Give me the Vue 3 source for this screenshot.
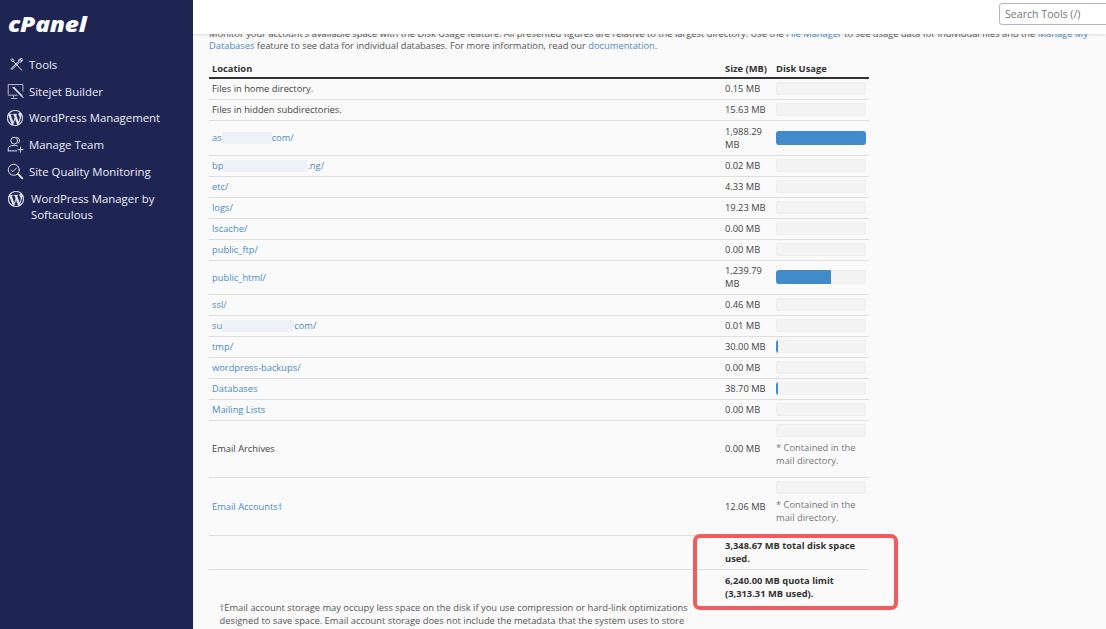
<script setup>
const nav = [
  { label: 'Tools', icon: 'tools' },
  { label: 'Sitejet Builder', icon: 'sitejet' },
  { label: 'WordPress Management', icon: 'wp' },
  { label: 'Manage Team', icon: 'team' },
  { label: 'Site Quality Monitoring', icon: 'quality' },
  { label: 'WordPress Manager by Softaculous', icon: 'wp', wrap: true },
]
const wpPath = 'M21.469 6.825c.84 1.537 1.318 3.3 1.318 5.175 0 3.979-2.156 7.456-5.363 9.325l3.295-9.527c.615-1.54.82-2.771.82-3.864 0-.405-.026-.78-.07-1.11m-7.981.105c.647-.03 1.232-.105 1.232-.105.582-.075.514-.93-.067-.899 0 0-1.755.135-2.88.135-1.064 0-2.85-.15-2.85-.15-.585-.03-.661.855-.075.885 0 0 .54.061 1.125.09l1.68 4.605-2.37 7.08L5.354 6.9c.649-.03 1.234-.1 1.234-.1.585-.075.516-.93-.065-.896 0 0-1.746.138-2.874.138-.2 0-.438-.008-.69-.015C4.911 3.15 8.235 1.215 12 1.215c2.809 0 5.365 1.072 7.286 2.833-.046-.003-.091-.009-.141-.009-1.06 0-1.812.923-1.812 1.914 0 .89.513 1.643 1.06 2.531.411.72.89 1.643.89 2.977 0 .915-.354 1.994-.821 3.479l-1.075 3.585-3.9-11.61.001.014zM12 22.784c-1.059 0-2.081-.153-3.048-.437l3.237-9.406 3.315 9.087c.024.053.05.101.078.149-1.12.393-2.325.609-3.582.609M1.211 12c0-1.564.336-3.05.935-4.39L7.29 21.709C3.694 19.96 1.212 16.271 1.211 12M12 0C5.385 0 0 5.385 0 12s5.385 12 12 12 12-5.385 12-12S18.615 0 12 0'

const rows = [
  { name: 'Files in home directory.', size: '0.15 MB', pct: 0, h: 21 },
  { name: 'Files in hidden subdirectories.', size: '15.63 MB', pct: 0, h: 21 },
  { a: 'as', gap: 50, b: 'com/', link: true, size: '1,988.29 MB', pct: 100, h: 35 },
  { a: 'bp', gap: 84, b: '.ng/', link: true, size: '0.02 MB', pct: 0, h: 21 },
  { name: 'etc/', link: true, size: '4.33 MB', pct: 0, h: 21 },
  { name: 'logs/', link: true, size: '19.23 MB', pct: 0, h: 21 },
  { name: 'lscache/', link: true, size: '0.00 MB', pct: 0, h: 21 },
  { name: 'public_ftp/', link: true, size: '0.00 MB', pct: 0, h: 21 },
  { name: 'public_html/', link: true, size: '1,239.79 MB', pct: 61, h: 34 },
  { name: 'ssl/', link: true, size: '0.46 MB', pct: 0, h: 21 },
  { a: 'su', gap: 72, b: 'com/', link: true, size: '0.01 MB', pct: 0, h: 21 },
  { name: 'tmp/', link: true, size: '30.00 MB', pct: 2, h: 21 },
  { name: 'wordpress-backups/', link: true, size: '0.00 MB', pct: 0, h: 21 },
  { name: 'Databases', link: true, size: '38.70 MB', pct: 2, h: 21 },
  { name: 'Mailing Lists', link: true, size: '0.00 MB', pct: 0, h: 21 },
  { name: 'Email Archives', size: '0.00 MB', pct: 0, h: 57, note: true },
  { name: 'Email Accounts†', link: true, size: '12.06 MB', pct: 0, h: 58, note: true },
]
</script>

<template>
  <div class="page">
    <aside class="sidebar">
      <div class="logo"><span class="logo-text">cPanel</span></div>
      <nav class="nav">
        <a v-for="item in nav" :key="item.label" class="nav-item" :class="{ wrap: item.wrap }">
          <span class="nav-icon">
            <svg v-if="item.icon === 'tools'" class="tools-icon" viewBox="0 0 20 20" width="15" height="15" fill="none" stroke="#e9ecf6" stroke-width="1.3" stroke-linecap="round" stroke-linejoin="round">
              <path d="M3.5 2.5 2.5 3.5 5 6.5 6.5 5Z" />
              <path d="M6 6 17 17.5" />
              <path d="M16.5 2.2 14.4 4.3 15.7 5.6 17.8 3.5C18.2 5.5 16.4 7.5 14.2 6.8L3.8 16.8 2.6 15.6 13 5.6C12.4 3.6 14.4 1.7 16.5 2.2Z" />
            </svg>
            <svg v-else-if="item.icon === 'sitejet'" viewBox="0 0 22 20" width="18" height="17" fill="none" stroke="#d9dcea" stroke-width="1">
              <path d="M1.5 13.5V1.5H19.5V10" />
              <path d="M1 14.5H13" />
              <path d="M8 15V17.5M5 18.5H12.5" />
              <path d="M6.5 5 11 9.5 17 15.5 20 18 18.5 14.5 12 8 9 4.5 6.5 5Z" fill="#d9dcea" stroke-width=".5" />
            </svg>
            <svg v-else-if="item.icon === 'wp'" viewBox="0 0 24 24" width="16" height="16" fill="#e3e6f2" stroke="#e3e6f2" stroke-width=".5">
              <path :d="wpPath" />
            </svg>
            <svg v-else-if="item.icon === 'team'" viewBox="0 0 20 20" width="17" height="17" fill="none" stroke="#e3e6f2" stroke-width="1.1" stroke-linecap="round">
              <circle cx="8.5" cy="5.5" r="4" />
              <path d="M11.5 1.6A4 4 0 0 1 13.5 8.5" />
              <path d="M1.5 17.5V15C1.5 12.5 4 11 8.5 11 10 11 11 11.2 12 11.5" />
              <path d="M1.5 17.5H11.5" />
              <path d="M16 13V19M13 16H19" />
            </svg>
            <svg v-else viewBox="0 0 20 20" width="17" height="17" fill="none" stroke="#e3e6f2" stroke-width="1.1" stroke-linecap="round" stroke-linejoin="round">
              <circle cx="8" cy="8" r="6.5" />
              <path d="M5 8.3 7 10.2 11 6" />
              <path d="M12.8 12.8 18 18" stroke-width="2.2" />
            </svg>
          </span>
          <span class="nav-label">{{ item.label }}</span>
        </a>
      </nav>
    </aside>

    <div class="main">
      <header class="topbar">
        <input class="search" type="text" placeholder="Search Tools (/)" />
      </header>
      <div class="scroll">
        <div class="content">
          <p class="intro">
            Monitor your account's available space with the Disk Usage feature. All presented figures are relative to the largest directory. Use the <a>File Manager</a> to see usage data for individual files and the <a>Manage My Databases</a> feature to see data for individual databases. For more information, read our <a>documentation</a>.
          </p>

          <table class="usage">
            <colgroup>
              <col class="c1" />
              <col class="c2" />
              <col class="c3" />
            </colgroup>
            <thead>
              <tr>
                <th>Location</th>
                <th>Size (MB)</th>
                <th>Disk Usage</th>
              </tr>
            </thead>
            <tbody>
              <tr v-for="row in rows" :key="row.size + (row.name || row.a)" :style="{ height: row.h + 'px' }">
                <td>
                  <component :is="row.link ? 'a' : 'span'">
                    <template v-if="row.a">{{ row.a }}<span class="redact" :style="{ width: row.gap + 'px' }"></span>{{ row.b }}</template>
                    <template v-else>{{ row.name }}</template>
                  </component>
                </td>
                <td>{{ row.size }}</td>
                <td class="bar-cell" :class="{ 'has-note': row.note }">
                  <div class="bar" :class="{ tall: row.h > 30 && !row.note }">
                    <div class="fill" :style="{ width: row.pct + '%' }"></div>
                  </div>
                  <div v-if="row.note" class="note">* Contained in the mail directory.</div>
                </td>
              </tr>
              <tr class="total first">
                <td></td>
                <td colspan="2">3,348.67 MB total disk space used.</td>
              </tr>
              <tr class="total last">
                <td></td>
                <td colspan="2">6,240.00 MB quota limit (3,313.31 MB used).</td>
              </tr>
            </tbody>
          </table>

          <p class="foot">
            †Email account storage may occupy less space on the disk if you use compression or hard-link optimizations designed to save space. Email account storage does not include the metadata that the system uses to store the email account's files.
          </p>
        </div>
      </div>
      <div class="highlight"></div>
    </div>
  </div>
</template>

<style>
html, body { margin: 0; height: 100%; overflow: hidden; }
</style>

<style scoped>
.page {
  display: flex;
  width: 1106px;
  height: 629px;
  overflow: hidden;
  font-family: "Open Sans", "Liberation Sans", sans-serif;
  color: #444;
  font-size: 9.33px;
}
.sidebar {
  width: 193px;
  flex: none;
  background: #1f2553;
  color: #e9ecf6;
  box-sizing: border-box;
}
.logo {
  font-weight: 800;
  font-style: italic;
  font-size: 21.5px;
  line-height: 24px;
  color: #fff;
  padding: 12px 0 0 8px;
}
.logo-text {
  display: inline-block;
  transform: scaleX(1.14);
  transform-origin: left center;
  letter-spacing: -0.2px;
}
.nav {
  display: flex;
  flex-direction: column;
  padding-top: 15px;
}
.nav-item {
  display: flex;
  align-items: center;
  height: 26.8px;
  padding-left: 7px;
  font-size: 11.4px;
  color: #e9ecf6;
}
.nav-item.wrap {
  align-items: flex-start;
  height: auto;
  padding-top: 6px;
  padding-left: 8px;
  line-height: 16px;
}
.nav-icon {
  width: 22px;
  flex: none;
  display: flex;
  align-items: center;
}
.nav-icon .tools-icon { margin-left: 2px; }
.nav-item.wrap .nav-icon { width: 23px; }
.wrap .nav-label { width: 140px; }
.main {
  flex: 1;
  position: relative;
  display: flex;
  flex-direction: column;
  background: #fafafa;
  min-width: 0;
}
.topbar {
  flex: none;
  height: 34px;
  background: #fff;
  box-shadow: 0 1px 3px rgba(0, 0, 0, 0.12);
  position: relative;
  z-index: 2;
  display: flex;
  justify-content: flex-end;
  padding-top: 3px;
  box-sizing: border-box;
}
.search {
  width: 112px;
  height: 22px;
  margin-right: -5px;
  box-sizing: border-box;
  border: 1px solid #b4b6c4;
  border-radius: 3px;
  padding: 0 5px;
  font-family: inherit;
  font-size: 10.6px;
  background: #fff;
  outline: none;
}
.search::placeholder { color: #777; opacity: 1; }
.scroll {
  flex: 1;
  overflow: hidden;
}
.content {
  margin-top: -6px;
  padding-left: 16px;
}
a { color: #4a8ac9; text-decoration: none; }
.intro {
  margin: 0;
  width: 882px;
  line-height: 12px;
  color: #555;
  font-size: 9.32px;
}
.usage {
  margin-top: 8px;
  width: 660px;
  table-layout: fixed;
  border-collapse: collapse;
}
.c1 { width: 513px; }
.c2 { width: 51px; }
.c3 { width: 96px; }
th {
  text-align: left;
  font-weight: 700;
  color: #333;
  height: 18px;
  padding: 0 3px;
  border-bottom: 2px solid #333;
  box-sizing: border-box;
  white-space: nowrap;
}
td {
  padding: 0 3px;
  border-bottom: 1px solid #ddd;
  line-height: 13px;
  vertical-align: middle;
  box-sizing: border-box;
}
.redact {
  display: inline-block;
  height: 12px;
  vertical-align: middle;
  background: #eef1f6;
}
.bar {
  width: 90px;
  height: 13px;
  box-sizing: border-box;
  background: #f3f3f3;
  border-radius: 3px;
  overflow: hidden;
  box-shadow: inset 0 0 0 1px #eeeeee;
}
.bar.tall { height: 14px; }
.fill {
  height: 100%;
  background: #428bca;
}
.has-note { vertical-align: top; padding-top: 3px; }
.note {
  margin-top: 4px;
  color: #777;
  line-height: 13px;
  width: 90px;
}
.total td {
  font-weight: 700;
  color: #333;
  height: 34px;
  padding-top: 2px;
  padding-bottom: 3px;
}
.total.last td {
  border-bottom: none;
  height: 33px;
  padding-top: 4px;
  padding-bottom: 1px;
}
.foot {
  margin: 0 0 0 10.5px;
  width: 474px;
  line-height: 12.5px;
  color: #555;
}
.highlight {
  position: absolute;
  left: 500px;
  top: 534px;
  width: 205px;
  height: 76px;
  box-sizing: border-box;
  border: 4px solid #f15b5b;
  border-radius: 7px;
  z-index: 3;
  pointer-events: none;
}
</style>
